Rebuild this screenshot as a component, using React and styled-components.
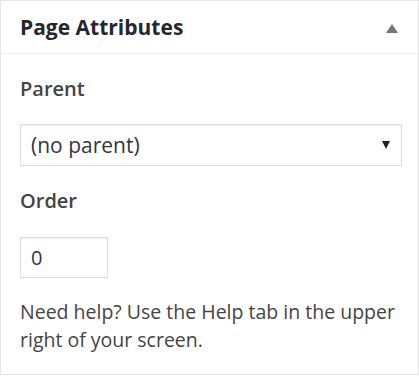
import React from "react";
import styled, { createGlobalStyle } from "styled-components";

const Global = createGlobalStyle`
  html, body { margin: 0; padding: 0; background: #ffffff; }
  body { font-family: "Open Sans", "Liberation Sans", sans-serif; }
`;

const Box = styled.section`
  box-sizing: border-box;
  width: 419px;
  height: 375px;
  border: 1px solid #e5e5e5;
  background: #fff;
  display: flex;
  flex-direction: column;
`;

const Header = styled.header`
  height: 52px;
  border-bottom: 1px solid #eeeeee;
  display: flex;
  align-items: center;
  justify-content: space-between;
  padding: 0 20px 0 19px;
`;

const Title = styled.h2`
  margin: 0;
  font-size: 21px;
  font-weight: 700;
  color: #23282d;
  line-height: 28px;
`;

const Toggle = styled.span`
  width: 0;
  height: 0;
  border-left: 6px solid transparent;
  border-right: 6px solid transparent;
  border-bottom: 9px solid #72777c;
  margin-top: 2px;
`;

const Body = styled.div`
  padding: 21px 17px 0 19px;
  display: flex;
  flex-direction: column;
  align-items: flex-start;
`;

const Label = styled.label`
  font-size: 20px;
  font-weight: 600;
  color: #444;
  line-height: 28px;
  margin-bottom: ${(p) => p.$gap}px;
`;

const Select = styled.div`
  box-sizing: border-box;
  width: 382px;
  height: 42px;
  border: 1px solid #ddd;
  box-shadow: inset 0 1px 2px rgba(0, 0, 0, 0.07);
  display: flex;
  align-items: center;
  justify-content: space-between;
  padding: 0 11px 0 10px;
  font-size: 21px;
  color: #32373c;
  margin-bottom: 21px;
`;

const Arrow = styled.span`
  width: 0;
  height: 0;
  border-left: 4px solid transparent;
  border-right: 4px solid transparent;
  border-top: 8px solid #222;
`;

const Input = styled.div`
  box-sizing: border-box;
  width: 88px;
  height: 41px;
  border: 1px solid #ddd;
  box-shadow: inset 0 1px 2px rgba(0, 0, 0, 0.07);
  display: flex;
  align-items: center;
  padding: 0 10px;
  font-size: 20px;
  color: #32373c;
  margin-bottom: 20px;
`;

const Help = styled.p`
  margin: 0;
  font-size: 19.5px;
  line-height: 28px;
  color: #444;
`;

export default function App() {
  return (
    <>
      <Global />
      <Box>
        <Header>
          <Title>Page Attributes</Title>
          <Toggle />
        </Header>
        <Body>
          <Label $gap={21}>Parent</Label>
          <Select>
            <span>(no parent)</span>
            <Arrow />
          </Select>
          <Label $gap={22}>Order</Label>
          <Input>0</Input>
          <Help>Need help? Use the Help tab in the upper right of your screen.</Help>
        </Body>
      </Box>
    </>
  );
}
